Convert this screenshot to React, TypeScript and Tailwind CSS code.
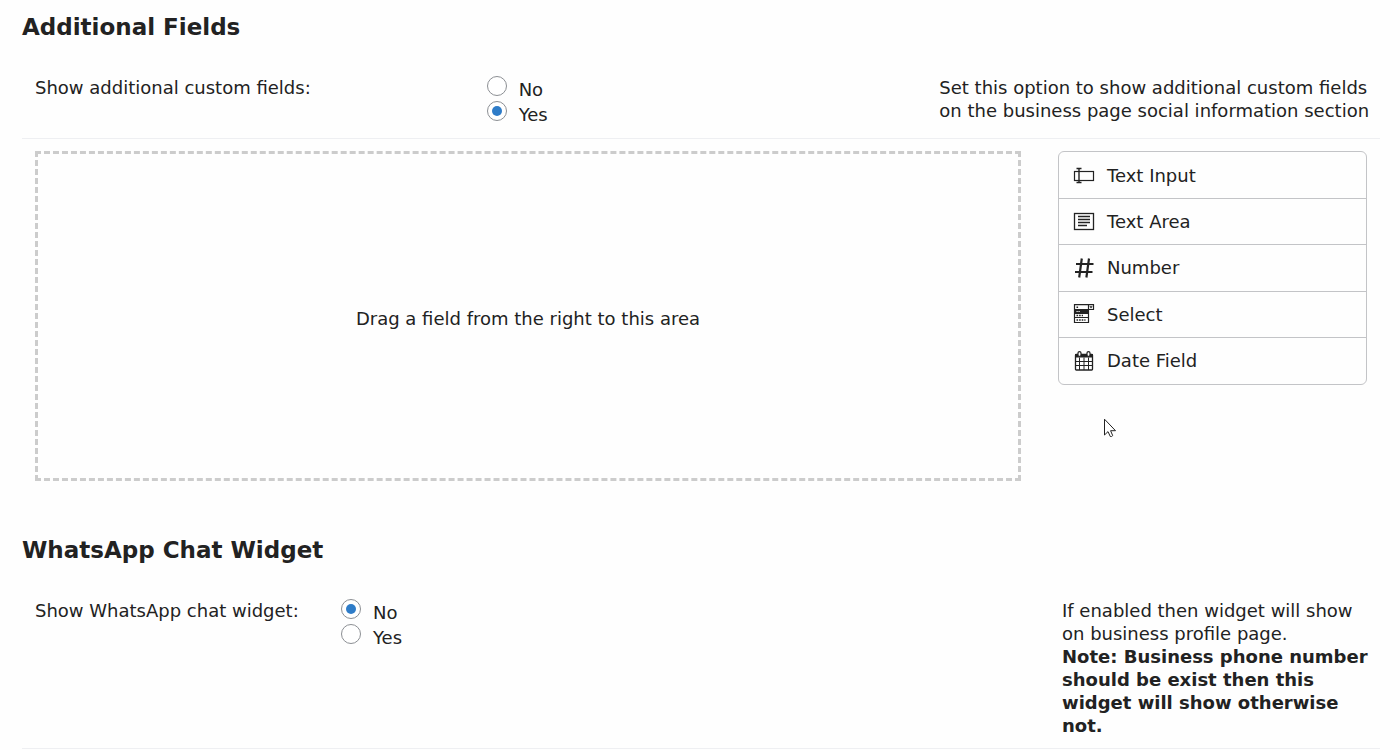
import type { ReactNode } from "react";

const iconClass = "h-5 w-[22px] shrink-0";

function TextInputIcon() {
  return (
    <svg viewBox="0 0 22 20" className={iconClass} fill="none" stroke="#222" strokeWidth="1.2" aria-hidden="true">
      <rect x="1.5" y="5.5" width="19" height="9" />
      <path d="M3.5 2.5H8.5M6 2.5V16.5M3.5 16.5H8.5" strokeWidth="1.4" />
    </svg>
  );
}

function TextAreaIcon() {
  return (
    <svg viewBox="0 0 22 20" className={iconClass} fill="none" stroke="#222" strokeWidth="1.3" aria-hidden="true">
      <rect x="1.5" y="1.5" width="19" height="16" />
      <path d="M5 4.5H17M5 7.5H17M5 10.5H17M5 13.5H14" />
    </svg>
  );
}

function NumberIcon() {
  return (
    <svg viewBox="0 0 22 20" className={iconClass} fill="none" stroke="#222" strokeWidth="2.2" aria-hidden="true">
      <path d="M8.8 .5L6.2 19.5M16 .5L13.4 19.5M3 6H20.5M2 14H19.5" />
    </svg>
  );
}

function SelectIcon() {
  return (
    <svg viewBox="0 0 22 20" className={iconClass} fill="none" stroke="#222" strokeWidth="1.2" aria-hidden="true">
      <path d="M1.5 .7H20.5V5.5H15.5V18.5H1.5ZM15.5 .7V5.5M1.5 5.5H15.5M1.5 9.5H15.5M1.5 13.5H15.5" />
      <path d="M1 5.5H15.5V9.5H1Z" fill="#222" stroke="none" />
      <path d="M16.4 2.2H19.6L18 4.4Z" fill="#222" stroke="none" />
      <path d="M3.5 3.2H5.5M3.5 11.5H10M3.5 16H12.5" strokeDasharray="1.6 1" strokeWidth="1.5" />
      <path d="M3.5 7.5H7" stroke="#fff" strokeDasharray="1.2 .8" />
    </svg>
  );
}

function DateIcon() {
  return (
    <svg viewBox="0 0 22 20" className={iconClass} fill="none" stroke="#222" strokeWidth="1" aria-hidden="true">
      <path d="M2 3H20V6.5H2Z" fill="#222" stroke="none" />
      <rect x="2.5" y="3.5" width="17" height="15.5" rx=".8" strokeWidth="1.3" />
      <path d="M6.5 6.5V19M11 6.5V19M15.5 6.5V19M2.5 10.5H19.5M2.5 14.5H19.5" />
      <rect x="5" y=".6" width="3" height="4.8" rx="1.5" fill="#fff" strokeWidth="1.2" />
      <rect x="14" y=".6" width="3" height="4.8" rx="1.5" fill="#fff" strokeWidth="1.2" />
    </svg>
  );
}

const fields: { label: string; icon: ReactNode }[] = [
  { label: "Text Input", icon: <TextInputIcon /> },
  { label: "Text Area", icon: <TextAreaIcon /> },
  { label: "Number", icon: <NumberIcon /> },
  { label: "Select", icon: <SelectIcon /> },
  { label: "Date Field", icon: <DateIcon /> },
];

function YesNo({ name, label, value }: { name: string; label: string; value: "No" | "Yes" }) {
  return (
    <div role="radiogroup" aria-label={label}>
      {["No", "Yes"].map((option) => (
        <label key={option} className="flex h-[25px] w-fit items-start gap-3">
          <input
            type="radio"
            name={name}
            defaultChecked={option === value}
            className="grid size-5 appearance-none place-items-center rounded-full border border-[#8c8f94] bg-white before:size-2.5 before:rounded-full checked:before:bg-[#2e7cc8]"
          />
          <span className="pt-0.5">{option}</span>
        </label>
      ))}
    </div>
  );
}

export default function App() {
  return (
    <main className="relative min-h-screen bg-[#fefefe] pr-5 pl-[22px] font-['DejaVu_Sans',sans-serif] text-[18px] leading-[23px] text-[#222]">
      <section>
        <h2 className="pt-3 text-[23px] leading-[30px] font-bold">Additional Fields</h2>
        <div className="mt-[22px] grid grid-cols-3 border-b border-[#eeeff2]">
          <p className="px-[13px] py-3">Show additional custom fields:</p>
          <div className="p-3">
            <YesNo name="custom-fields" label="Show additional custom fields" value="Yes" />
          </div>
          <p className="py-3 pr-2 pl-3">
            Set this option to show additional custom fields on the business page social information section
          </p>
        </div>
        <div className="flex items-start gap-[37px] px-[13px] pt-3">
          <div className="flex h-[330px] flex-1 items-center justify-center border-3 border-dashed border-[#ccc] pt-1">
            Drag a field from the right to this area
          </div>
          <ul className="grid h-[234px] w-[309px] grid-rows-5 divide-y divide-[#c3c4c7] rounded-md border border-[#c3c4c7] pt-px">
            {fields.map(({ label, icon }) => (
              <li key={label}>
                <button type="button" className="flex size-full items-center gap-3 px-3.5 text-left">
                  {icon}
                  {label}
                </button>
              </li>
            ))}
          </ul>
        </div>
      </section>

      <section className="mt-[54px]">
        <h2 className="text-[23px] leading-[30px] font-bold">WhatsApp Chat Widget</h2>
        <div className="mt-[22px] flex border-b border-[#eeeff2]">
          <p className="w-[307px] px-[13px] py-3">Show WhatsApp chat widget:</p>
          <div className="flex-1 p-3">
            <YesNo name="whatsapp-widget" label="Show WhatsApp chat widget" value="No" />
          </div>
          <p className="w-[330px] pt-3 pr-2 pb-[11px] pl-3">
            If enabled then widget will show on business profile page.
            <br />
            <b>Note: Business phone number should be exist then this widget will show otherwise not.</b>
          </p>
        </div>
      </section>

      <svg
        viewBox="0 0 12 20"
        className="pointer-events-none absolute top-[418px] left-[1104px] h-5 w-3"
        fill="#fff"
        stroke="#222"
        strokeWidth="1"
        aria-hidden="true"
      >
        <path d="M.5 1.2V17L4 13.6L6.3 18.5Q7.5 19 8.7 17.6L6.6 12.7H11.5Z" />
      </svg>
    </main>
  );
}
